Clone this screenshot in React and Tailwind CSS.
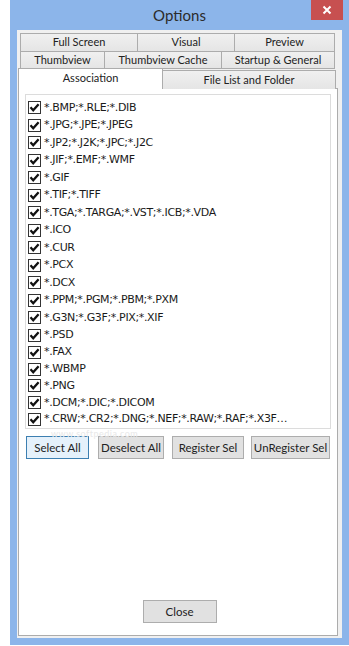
import React from "react";

const items = [
  "*.BMP;*.RLE;*.DIB",
  "*.JPG;*.JPE;*.JPEG",
  "*.JP2;*.J2K;*.JPC;*.J2C",
  "*.JIF;*.EMF;*.WMF",
  "*.GIF",
  "*.TIF;*.TIFF",
  "*.TGA;*.TARGA;*.VST;*.ICB;*.VDA",
  "*.ICO",
  "*.CUR",
  "*.PCX",
  "*.DCX",
  "*.PPM;*.PGM;*.PBM;*.PXM",
  "*.G3N;*.G3F;*.PIX;*.XIF",
  "*.PSD",
  "*.FAX",
  "*.WBMP",
  "*.PNG",
  "*.DCM;*.DIC;*.DICOM",
  "*.CRW;*.CR2;*.DNG;*.NEF;*.RAW;*.RAF;*.X3F…",
];

function Check() {
  return (
    <div className="w-[13px] h-[13px] border border-[#333333] bg-white flex items-center justify-center shrink-0">
      <svg width="11" height="11" viewBox="0 0 11 11">
        <path d="M1.5 5.3 L4.2 8.2 L9.6 2.2" fill="none" stroke="#111" strokeWidth="2.3" />
      </svg>
    </div>
  );
}

function Tab({ w, children, cls = "" }) {
  return (
    <div
      className={`h-full border border-[#acacac] bg-gradient-to-b from-[#f0f0f0] to-[#e5e5e5] flex items-center justify-center text-[11px] text-[#222222] -ml-px first:ml-0 ${w} ${cls}`}
    >
      {children}
    </div>
  );
}

function Btn({ w, ml, children, def }) {
  return (
    <div
      className={`h-[23px] ${w} ${ml} flex items-center justify-center text-[11.5px] text-[#222222] border ${
        def ? "border-[#3c7fb1] bg-[#e5f1fb]" : "border-[#adadad] bg-[#e1e1e1]"
      }`}
    >
      {children}
    </div>
  );
}

export default function App() {
  return (
    <div className="w-[349px] h-[646px] bg-white" style={{ fontFamily: "Lato, 'Noto Sans', sans-serif" }}>
      <div className="ml-[10px] w-[339px] h-[645px] bg-[#8cb5ea] flex flex-col">
        {/* title bar */}
        <div className="h-[30px] relative flex items-center justify-center shrink-0">
          <span className="text-[15px] text-[#2b2b2b] mt-[1px]">Options</span>
          <div className="absolute right-[6px] top-0 w-[32px] h-[20px] bg-[#c75050] flex items-center justify-center">
            <svg width="10" height="10" viewBox="0 0 10 10">
              <path d="M1.5 1.5 L8.5 8.5 M8.5 1.5 L1.5 8.5" stroke="white" strokeWidth="2" />
            </svg>
          </div>
        </div>
        {/* client */}
        <div className="mx-[7px] mb-[7px] flex-1 bg-[#f0f0f0] flex flex-col pt-[3px]">
          <div className="ml-[3px] w-[315px] h-[19px] flex">
            <Tab w="w-[118px]">Full Screen</Tab>
            <Tab w="w-[98px]">Visual</Tab>
            <Tab w="w-[101px]">Preview</Tab>
          </div>
          <div className="ml-[3px] w-[315px] h-[18px] -mt-px flex">
            <Tab w="w-[85px]">Thumbview</Tab>
            <Tab w="w-[118px]">Thumbview Cache</Tab>
            <Tab w="w-[114px]">Startup &amp; General</Tab>
          </div>
          <div className="ml-[1px] w-[318px] h-[21px] -mt-[1px] flex items-end relative z-10">
            <div className="w-[145px] h-[21px] border border-[#acacac] border-b-0 bg-white flex items-center justify-center text-[11px] text-[#222222] pb-[2px]">
              Association
            </div>
            <div className="w-[174px] h-[19px] -ml-px border border-[#acacac] border-b-0 bg-gradient-to-b from-[#f0f0f0] to-[#e5e5e5] flex items-center justify-center text-[11px] text-[#222222]">
              File List and Folder
            </div>
          </div>
          {/* panel */}
          <div className="ml-[1px] w-[320px] flex-1 mb-[2px] border border-[#acacac] bg-white flex flex-col -mt-px">
            <div className="mx-[6px] mt-[5px] h-[335px] border border-[#dcdcdc] bg-white pt-[4px] pl-[2px]" style={{ fontFamily: "'DejaVu Sans', sans-serif" }}>
              {items.map((t, i) => (
                <div key={i} className={`flex items-center ${i < 14 ? "h-[17.5px]" : "h-[16.8px]"}`}>
                  <Check />
                  <span className="ml-[3px] text-[11px] tracking-[-0.35px] text-[#1a1a1a] whitespace-nowrap">{t}</span>
                </div>
              ))}
            </div>
            <div className="relative h-0">
              <div className="absolute left-[32px] top-0 text-[9px] leading-[9px] text-[#e8e8e8] tracking-[0.5px]">www.softpedia.com</div>
            </div>
            <div className="flex mt-[7px]">
              <Btn w="w-[63px]" ml="ml-[7px]" def>Select All</Btn>
              <Btn w="w-[66px]" ml="ml-[9px]">Deselect All</Btn>
              <Btn w="w-[72px]" ml="ml-[8px]">Register Sel</Btn>
              <Btn w="w-[79px]" ml="ml-[7px]">UnRegister Sel</Btn>
            </div>
            <div className="flex-1" />
            <div className="flex justify-center mb-[12px]">
              <Btn w="w-[74px]" ml="ml-[3px]">Close</Btn>
            </div>
          </div>
        </div>
      </div>
    </div>
  );
}
